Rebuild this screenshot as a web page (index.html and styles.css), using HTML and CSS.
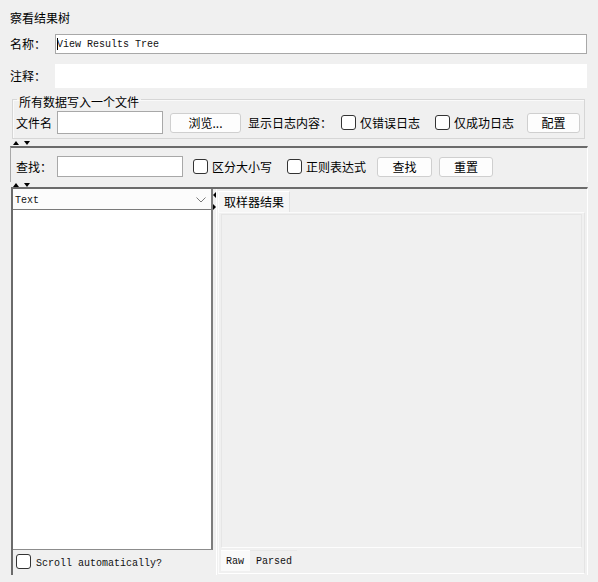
FILE: index.html
```html
<!DOCTYPE html>
<html lang="zh">
<head>
<meta charset="utf-8">
<title>察看结果树</title>
<link rel="stylesheet" href="styles.css">
</head>
<body>
<div class="page">
  <div class="title">察看结果树</div>

  <div class="field-row">
    <span class="field-label">名称：</span>
    <div class="text-input name-input"><span class="caret"></span>View Results Tree</div>
  </div>

  <div class="field-row comment-row">
    <span class="field-label">注释：</span>
    <div class="text-input comment-input"></div>
  </div>

  <fieldset class="file-group">
    <legend>所有数据写入一个文件</legend>
    <div class="file-row">
      <span>文件名</span>
      <div class="text-input file-input"></div>
      <button class="btn browse">浏览...</button>
      <span class="log-label">显示日志内容：</span>
      <label class="check only-errors"><span class="box"></span>仅错误日志</label>
      <label class="check only-success"><span class="box"></span>仅成功日志</label>
      <button class="btn config">配置</button>
    </div>
  </fieldset>

  <div class="divider-h first"><span class="arr up"></span><span class="arr down"></span></div>

  <div class="search-panel">
    <div class="search-row">
      <span>查找：</span>
      <div class="text-input search-input"></div>
      <label class="check case"><span class="box"></span>区分大小写</label>
      <label class="check regex"><span class="box"></span>正则表达式</label>
      <button class="btn find">查找</button>
      <button class="btn reset">重置</button>
    </div>
  </div>

  <div class="divider-h second"><span class="arr up"></span><span class="arr down"></span></div>

  <div class="results">
    <div class="tree-pane">
      <div class="tree-box">
        <div class="combo">
          <span>Text</span>
          <svg class="chevron" width="10" height="6" viewBox="0 0 10 6"><polyline points="0.5,0.5 5,5 9.5,0.5" fill="none" stroke="#7a7a7a" stroke-width="1"/></svg>
        </div>
        <div class="tree-list"></div>
      </div>
      <label class="check scroll"><span class="box"></span><span class="scroll-text">Scroll automatically?</span></label>
    </div>

    <div class="divider-v"><span class="arr left"></span><span class="arr right"></span></div>

    <div class="result-pane">
      <div class="tabs"><span class="tab active">取样器结果</span></div>
      <div class="tab-body">
        <div class="view-area"></div>
        <div class="sub-tabs">
          <span class="sub-tab active">Raw</span>
          <span class="sub-tab">Parsed</span>
        </div>
      </div>
    </div>
  </div>
</div>
</body>
</html>
```

FILE: styles.css
```css
* { box-sizing: border-box; }

html, body {
  margin: 0;
  background: #f0f0f0;
}

body {
  width: 598px;
  height: 582px;
  overflow: hidden;
  font: 12px/16px "Noto Sans CJK SC", "Microsoft YaHei", sans-serif;
  color: #000;
}

.page {
  display: flex;
  flex-direction: column;
  height: 582px;
  padding: 0 10px;
}

.title {
  height: 34px;
  padding-top: 10px;
  line-height: 16px;
}

/* label + text field rows */
.field-row {
  display: flex;
  align-items: center;
  height: 20px;
}
.field-label { width: 45px; flex: none; }

.text-input {
  background: #fff;
  border: 1px solid #a8a8a8;
}

.name-input {
  flex: 1;
  height: 20px;
  margin-right: 1px;
  padding: 2px 0 0 1px;
  font: 10px/16px "Liberation Mono", "Courier New", monospace;
  color: #111;
  display: flex;
  align-items: center;
}
.caret {
  width: 1px;
  height: 12px;
  background: #000;
  margin: -2px -1px 0 0;
}

.comment-row { margin-top: 10px; height: 24px; }
.comment-input {
  flex: 1;
  height: 24px;
  border: none;
  margin-right: 1px;
}

/* titled group */
.file-group {
  margin: 0 3px 0 2px;
  padding: 0 3px 4px;
  border: 1px solid #d6d6d6;
  box-shadow: inset 1px 1px 0 #fafafa;
  min-width: 0;
}
.file-group legend {
  padding: 6px 2px 0;
  margin-left: 1px;
  line-height: 16px;
}

.file-row,
.search-row {
  display: flex;
  align-items: center;
  white-space: nowrap;
}
.file-row { height: 23px; margin-top: 1px; }

.file-input { width: 106px; height: 23px; margin-left: 5px; }

.btn {
  height: 20px;
  padding: 0;
  font: inherit;
  line-height: 18px;
  color: #000;
  background: #fdfdfd;
  border: 1px solid #cfcfcf;
  border-radius: 3px;
  text-align: center;
}
.browse { width: 71px; margin-left: 7px; }
.log-label { margin-left: 7px; }
.config { width: 53px; margin-left: 13px; }

.check {
  display: flex;
  align-items: center;
}
.check .box {
  width: 15px;
  height: 15px;
  margin-right: 4px;
  background: #fff;
  border: 1px solid #333;
  border-radius: 3px;
}
.only-errors { margin-left: 9px; }
.only-success { margin-left: 15px; }

/* one-touch split dividers */
.divider-h {
  display: flex;
  align-items: center;
  gap: 5px;
  padding-left: 3px;
}
.divider-h.first { height: 7px; padding-top: 1px; }
.divider-h.second { height: 5px; }

.arr { width: 0; height: 0; border: 3px solid transparent; }
.arr.up { border-bottom: 4px solid #000; border-top-width: 0; }
.arr.down { border-top: 4px solid #000; border-bottom-width: 0; }
.arr.left { border-right: 3px solid #000; border-left-width: 0; border-top-width: 3px; border-bottom-width: 3px; }
.arr.right { border-left: 3px solid #000; border-right-width: 0; }

.search-panel {
  height: 36px;
  padding: 8px 0 0 5px;
  border-top: 2px solid #6b6b6b;
  border-left: 1px solid #a8a8a8;
  border-right: 1px solid #fff;
}
.search-row { height: 21px; }
.search-input { width: 126px; height: 21px; margin-left: 5px; }
.case { margin-left: 10px; }
.regex { margin-left: 15px; }
.find { width: 55px; margin-left: 11px; }
.reset { width: 54px; margin-left: 7px; }

/* results area */
.results {
  flex: 1;
  display: flex;
  margin: 0 0 7px 1px;
  border-top: 2px solid #6b6b6b;
  border-left: 2px solid #6b6b6b;
  border-right: 1px solid #fff;
}

.tree-pane {
  width: 200px;
  display: flex;
  flex-direction: column;
}
.tree-box {
  flex: 1;
  display: flex;
  flex-direction: column;
  border-right: 2px solid #7d7d7d;
  border-bottom: 1px solid #8c8c8c;
}
.combo {
  height: 21px;
  display: flex;
  align-items: center;
  justify-content: space-between;
  padding: 3px 5px 0 2px;
  background: #fcfcfc;
  border-bottom: 1px solid #7a7a7a;
  font: 10px/16px "Liberation Mono", "Courier New", monospace;
  color: #111;
}
.chevron { margin-top: -2px; }
.tree-list { flex: 1; background: #fff; }

.check.scroll {
  height: 25px;
  align-items: flex-start;
  padding-left: 3px;
  font: 10px/16px "Liberation Mono", "Courier New", monospace;
  color: #111;
}
.check.scroll .box { margin: 4px 5px 0 0; }
.scroll-text { margin-top: 6px; }

.divider-v {
  width: 4px;
  display: flex;
  flex-direction: column;
  gap: 6px;
  padding-top: 3px;
  border-right: 1px solid #fff;
}

.result-pane {
  flex: 1;
  display: flex;
  flex-direction: column;
  padding-bottom: 1px;
}
.tabs { height: 23px; display: flex; align-items: flex-end; }
.tab {
  height: 21px;
  margin-left: 1px;
  padding: 2px 5px 0;
  line-height: 16px;
  background: #f6f6f6;
  border-top: 1px solid #fff;
  border-left: 1px solid #fff;
  border-right: 1px solid #e2e2e2;
}
.tab-body {
  flex: 1;
  display: flex;
  flex-direction: column;
  margin: 0 2px 0 1px;
  padding: 1px 2px 0 2px;
  border: 1px solid #fbfbfb;
  border-right-color: #e4e4e4;
  border-bottom-color: #fff;
}
.view-area {
  flex: 1;
  border: 1px solid #e6e6e6;
  border-bottom-color: #fdfdfd;
}
.sub-tabs { height: 25px; display: flex; align-items: center; }
.sub-tab {
  height: 21px;
  padding: 3px 5px 0 6px;
  font: 10px/16px "Liberation Mono", "Courier New", monospace;
  color: #111;
  border-top: 1px solid #e8e8e8;
}
.sub-tab.active { padding: 3px 6px 0 5px; background: #fafafa; border-top-color: #fff; }
```
